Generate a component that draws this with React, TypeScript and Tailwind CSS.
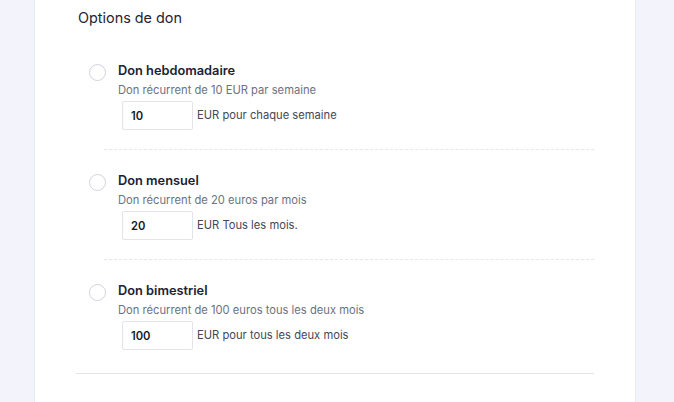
import { useState } from "react";

type Option = {
  id: string;
  title: string;
  description: string;
  amount: string;
  suffix: string;
};

const options: Option[] = [
  {
    id: "weekly",
    title: "Don hebdomadaire",
    description: "Don récurrent de 10 EUR par semaine",
    amount: "10",
    suffix: "EUR pour chaque semaine",
  },
  {
    id: "monthly",
    title: "Don mensuel",
    description: "Don récurrent de 20 euros par mois",
    amount: "20",
    suffix: "EUR Tous les mois.",
  },
  {
    id: "bimonthly",
    title: "Don bimestriel",
    description: "Don récurrent de 100 euros tous les deux mois",
    amount: "100",
    suffix: "EUR pour tous les deux mois",
  },
];

const App = () => {
  const [selected, setSelected] = useState<string | null>(null);
  const [amounts, setAmounts] = useState<Record<string, string>>(
    Object.fromEntries(options.map((o) => [o.id, o.amount]))
  );

  return (
    <div
      className="min-h-[402px] bg-[#f3f3fc] px-[34px] flex"
      style={{ fontFamily: "Inter, 'Noto Sans', sans-serif" }}
    >
      <main className="w-[602px] bg-white border-x border-[#e9e9f3] pl-[41px] pr-[41px] pt-[8px]">
        <h2 className="pl-[2px] text-[14.4px] leading-[20px] text-[#1f2433]">Options de don</h2>

        <div className="mt-[33px]">
          {options.map((o, idx) => (
            <div key={o.id}>
              <div className="flex pl-[13px]">
                <button
                  type="button"
                  onClick={() => setSelected(o.id)}
                  className="mt-[3px] h-[17px] w-[17px] shrink-0 rounded-full border border-[#cfd3dc] bg-white flex items-center justify-center"
                  aria-label={o.title}
                >
                  {selected === o.id && <span className="h-[7px] w-[7px] rounded-full bg-[#4f46e5]" />}
                </button>
                <div className="ml-[12px]">
                  <div className="pt-[1px] text-[12.8px] leading-[18px] font-semibold text-[#1c2333]">{o.title}</div>
                  <div className="mt-[1px] text-[11.2px] leading-[18px] text-[#6b7280]">{o.description}</div>
                  <div className="mt-[2px] ml-[4px] flex items-center">
                    <input
                      value={amounts[o.id]}
                      onChange={(e) => setAmounts({ ...amounts, [o.id]: e.target.value })}
                      className="h-[29px] w-[71px] border border-[#e2e4ea] rounded-[2px] pl-[8px] text-[11.2px] font-semibold text-[#111827] outline-none"
                    />
                    <span className="ml-[4px] text-[11.2px] text-[#464657]">{o.suffix}</span>
                  </div>
                </div>
              </div>
              {idx < options.length - 1 ? (
                <div className="ml-[28px] mt-[19px] mb-[21px] border-t border-dashed border-[#e5e7eb]" />
              ) : (
                <div className="mt-[23px] border-t border-[#e3e4ea]" />
              )}
            </div>
          ))}
        </div>
      </main>
    </div>
  );
};

export default App;
